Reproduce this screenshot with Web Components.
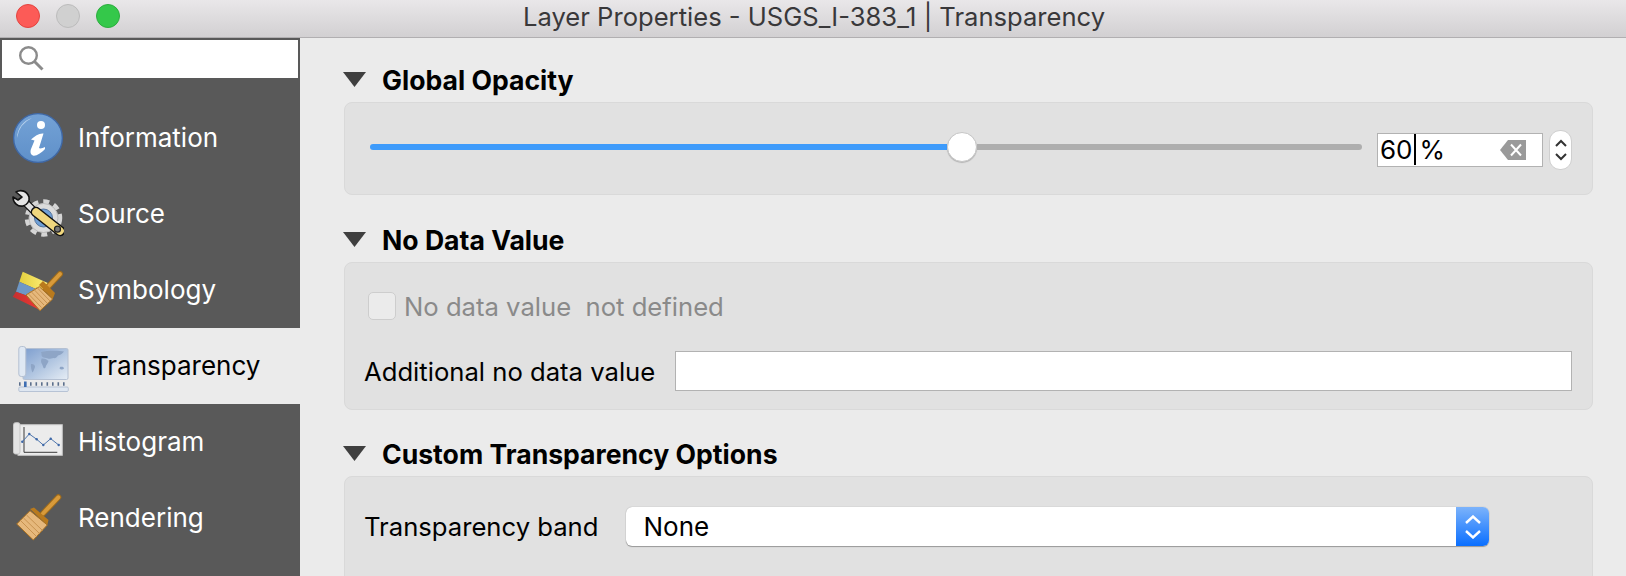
<!DOCTYPE html>
<html lang="en">
<head>
<meta charset="utf-8">
<title>Layer Properties</title>
<style>
html, body {
	margin: 0;
	height: 576px;
	overflow: hidden;
	background: #ebebeb;
	font-family: Inter, "Liberation Sans", sans-serif;
	font-size: 26px;
	color: #000;
}
#window {
	display: flex;
	flex-direction: column;
	height: 576px;
}
#main {
	display: flex;
	flex: 1;
	min-height: 0;
}
#content {
	flex: 1;
	min-width: 0;
	padding: 22px 33px 0 44px;
	overflow: hidden;
}
</style>
</head>
<body>
<div id="window">
	<mac-titlebar>Layer Properties - USGS_I-383_1 | Transparency</mac-titlebar>
	<div id="main">
		<settings-sidebar>
			<sidebar-item>
				<svg slot="icon" width="52" height="52" viewBox="0 0 52 52">
					<defs>
						<linearGradient id="infoFill" x1="0" y1="0" x2="0" y2="1"><stop offset="0" stop-color="#74a2d6"/><stop offset="1" stop-color="#5f90c9"/></linearGradient>
					</defs>
					<circle cx="26" cy="26" r="24.4" fill="url(#infoFill)" stroke="#3f68a6" stroke-width="1.4"/>
					<path d="M5 26 A21 21 0 0 1 20 6 A26 26 0 0 0 5 26Z" fill="#b9d2ec"/>
					<circle cx="29" cy="13" r="4" fill="#fff"/>
					<path d="M19 27.5C23 24 27 21 31.5 21.5L27 36C28 37 31 36 33 35L33 37C29 41 25 44 21.5 43.7C18.5 43 18 40 19 37L22.5 28.5Z" fill="#fff"/>
				</svg>
				Information
			</sidebar-item>
			<sidebar-item>
				<svg slot="icon" width="52" height="52" viewBox="0 0 52 52">
					<circle cx="31.5" cy="30" r="16.5" fill="none" stroke="#d5d5d5" stroke-width="4.5" stroke-dasharray="6 5"/>
					<circle cx="31.5" cy="30" r="14.5" fill="#dcdcdc" stroke="#bdbdbd" stroke-width="1"/>
					<circle cx="31.5" cy="30" r="9" fill="#6f9fd6" stroke="#54749c" stroke-width="1"/>
					<path d="M23 24L12 13" stroke="#111" stroke-width="8" stroke-linecap="round"/>
					<path d="M23 24L12 13" stroke="#dfdfdf" stroke-width="5.4" stroke-linecap="round"/>
					<path d="M4 4C9 1 15 3 17 9C18 13 15 17 11 18C6 19 1 15 1 9L6 12L10 9Z" fill="#e4e4e4" stroke="#111" stroke-width="1.6" stroke-linejoin="round"/>
					<path d="M24 24L48 43" stroke="#111" stroke-width="10.5" stroke-linecap="round"/>
					<path d="M24 24L48 43" stroke="#f0d77e" stroke-width="7.6" stroke-linecap="round"/>
					<circle cx="45.5" cy="41.2" r="3" fill="#777" stroke="#222" stroke-width="1.2"/>
				</svg>
				Source
			</sidebar-item>
			<sidebar-item>
				<svg slot="icon" width="52" height="52" viewBox="0 0 52 52">
					<defs>
						<linearGradient id="flagYellow" x1="0" y1="0" x2="1" y2="0"><stop offset="0" stop-color="#e3cf3e"/><stop offset="1" stop-color="#fff07a"/></linearGradient>
						<linearGradient id="flagRed" x1="0" y1="0" x2="1" y2="0"><stop offset="0" stop-color="#c52f2f"/><stop offset="1" stop-color="#f03a34"/></linearGradient>
					</defs>
					<path d="M10.7 7.7L36.3 19.3L33 29L7.3 17.7Z" fill="url(#flagYellow)"/>
					<path d="M7.3 17.7L33 29L30 37L4 27.7Z" fill="#6e97c6"/>
					<path d="M4 27.7L30 37L28 46L.7 32.7Z" fill="url(#flagRed)"/>
					<path d="M48 10L34 25" stroke="#9c6a1c" stroke-width="6" stroke-linecap="round"/>
					<path d="M48 10L34 25" stroke="#d89a3a" stroke-width="4" stroke-linecap="round"/>
					<path d="M27.3 22.7L40.7 35L28 46.7L14 31Z" fill="#e6b87c" stroke="#a9701f" stroke-width="1"/>
					<path d="M18.5 27L32 41M21.5 25L35 39M24.500 23L38 37M16 29.500L29.500 43.500" stroke="#c79250" stroke-width="1"/>
					<path d="M27 21L31 17L43 29L40.700 35Z" fill="#b97a1d"/>
				</svg>
				Symbology
			</sidebar-item>
			<sidebar-item selected>
				<svg slot="icon" width="52" height="52" viewBox="0 0 52 52">
					<defs>
						<linearGradient id="mapFill" x1="0" y1="0" x2="1" y2="1"><stop offset="0" stop-color="#7c9dce"/><stop offset=".55" stop-color="#b4c8e2"/><stop offset="1" stop-color="#e6edf5"/></linearGradient>
					</defs>
					<rect x="6" y="8.500" width="45" height="31" rx="1.500" fill="url(#mapFill)" stroke="#b4c0d2"/>
					<g fill="#8ea5c6">
						<path d="M24 12C30 10.500 42 10.500 47 11.500C45.500 14 43 15 41 15.500C40 17.500 38 18.500 36.500 18C34.500 18 32 19.500 31 18.500C29 17.500 26 18 25 16.500C24 15 25 13.500 24 12Z"/>
						<path d="M24.500 18.500C27 18 30.500 19.500 31.500 21C30.500 24 29 25 28.500 27.500C27.500 29 26.500 28.500 26 26.500C25.500 24.500 24 23 24 21Z"/>
						<path d="M14 24C16 23.500 18.500 25 18 27C17 29.500 16.500 31.500 15.500 32.500C14.500 30.500 13.500 26.500 14 24Z"/>
						<path d="M43 27C45 26.500 47 27 47 28.500C45.500 30 43.500 29.500 42.500 28.500Z"/>
					</g>
					<rect x="1.800" y="6.500" width="7" height="30" rx="2.500" fill="#dfe8f3" stroke="#b4c0d2"/>
					<path d="M2 44H51" stroke="#5b6f8c" stroke-width="3.600" stroke-dasharray="1.600 3.900"/>
					<rect x="1.800" y="47" width="49.500" height="4.500" rx="1.200" fill="#dfe7f1" stroke="#b7c3d5"/>
					<rect x="7" y="41.500" width="2.600" height="5.500" fill="#3f6fb3"/>
				</svg>
				Transparency
			</sidebar-item>
			<sidebar-item>
				<svg slot="icon" width="52" height="52" viewBox="0 0 52 52">
					<rect x="6" y="8.700" width="44.300" height="30.600" fill="#ececec" stroke="#c6c6c6"/>
					<rect x="1.500" y="6.700" width="6.500" height="31.300" rx="2" fill="#e4e4e4" stroke="#c6c6c6"/>
					<path d="M12 11V36.300H45.300" fill="none" stroke="#3a3a3a" stroke-width="1"/>
					<path d="M10.300 25.700L17.300 18L24.700 23.300L31.300 29L38.700 22.700L46.700 29" fill="none" stroke="#4f76ad" stroke-width="1"/>
					<g fill="#3e68a8">
						<circle cx="10.300" cy="25.700" r="1.200"/><circle cx="17.300" cy="18" r="1.200"/><circle cx="24.700" cy="23.300" r="1.200"/><circle cx="31.300" cy="29" r="1.200"/><circle cx="38.700" cy="22.700" r="1.200"/><circle cx="46.700" cy="29" r="1.200"/>
					</g>
				</svg>
				Histogram
			</sidebar-item>
			<sidebar-item>
				<svg slot="icon" width="52" height="52" viewBox="0 0 52 52">
					<path d="M46.300 5.300L31 21.500" stroke="#9c6a1c" stroke-width="6" stroke-linecap="round"/>
					<path d="M46.300 5.300L31 21.500" stroke="#d89a3a" stroke-width="4" stroke-linecap="round"/>
					<path d="M18 18.700L35.300 33L21.300 48L4.700 32Z" fill="#e6b87c" stroke="#a9701f" stroke-width="1"/>
					<path d="M8.500 28.500L24.500 44.500M11.500 26L27.500 41.500M14.500 23L30.500 38.500" stroke="#c79250" stroke-width="1"/>
					<path d="M18 17L22 15.500L36.500 28L35.300 33Z" fill="#b97a1d"/>
				</svg>
				Rendering
			</sidebar-item>
		</settings-sidebar>
		<div id="content">
			<prop-group heading="Global Opacity" style="--box-height: 93px">
				<opacity-slider value="60"></opacity-slider>
			</prop-group>
			<prop-group heading="No Data Value" style="--box-height: 148px; --gap-top: 25px">
				<no-data-form></no-data-form>
			</prop-group>
			<prop-group heading="Custom Transparency Options" style="--box-height: 130px; --gap-top: 24px">
				<band-form></band-form>
			</prop-group>
		</div>
	</div>
</div>

<script>
const makeTemplate = (html) => {
	const t = document.createElement('template');
	t.innerHTML = html;
	return t;
}

// Every element here only needs a template cloned into an open shadow root
const defineElement = (name, html) => {
	const template = makeTemplate(html);
	customElements.define(name, class extends HTMLElement {
		constructor() {
			super();
			this.attachShadow({mode: 'open'}).appendChild(template.content.cloneNode(true));
		}
	});
}

defineElement('mac-titlebar', `
<style>
:host {
	display: flex;
	align-items: center;
	box-sizing: border-box;
	height: 38px;
	flex: none;
	padding-left: 16px;
	background: linear-gradient(#e9e7e9, #d2d0d2);
	border-bottom: 1px solid #b1afb1;
}
.light {
	width: 22px;
	height: 22px;
	margin: 0 16px 5px 0;
	border-radius: 50%;
	border: 1px solid;
	flex: none;
}
.close { background: #fc5b57; border-color: #e3443f; }
.min { background: #d0d0d0; border-color: #bcbcbc; }
.max { background: #34c84a; border-color: #2cad3e; }
.title {
	margin-left: 387px;
	padding-bottom: 4px;
	font-size: 25.6px;
	color: #39383a;
	white-space: nowrap;
}
</style>
<span class="light close"></span><span class="light min"></span><span class="light max"></span>
<span class="title"><slot></slot></span>
`);

defineElement('settings-sidebar', `
<style>
:host {
	display: block;
	flex: none;
	width: 300px;
	background: #595959;
}
.search {
	display: flex;
	align-items: center;
	box-sizing: border-box;
	height: 38px;
	margin: 2px 2px 22px;
	padding-left: 16px;
	background: #fff;
}
</style>
<div class="search">
	<svg width="28" height="28" viewBox="0 0 28 28" fill="none" stroke="#8b8b8b" stroke-width="2.400">
		<circle cx="10.500" cy="10.500" r="8.300"/>
		<path d="M16.500 16.500L24.500 24.500" stroke-width="3"/>
	</svg>
</div>
<slot></slot>
`);

defineElement('sidebar-item', `
<style>
:host {
	display: flex;
	align-items: center;
	height: 76px;
	padding-left: 12px;
	gap: 14px;
	color: #fff;
	font-size: 26px;
}
:host([selected]) {
	padding-left: 17px;
	gap: 23px;
	background: #ebebeb;
	color: #000;
}
.icon {
	display: block;
	width: 52px;
	height: 52px;
	flex: none;
}
.label { margin-bottom: 2px; }
</style>
<span class="icon"><slot name="icon"></slot></span>
<span class="label"><slot></slot></span>
`);

const propGroupTemplate = makeTemplate(`
<style>
:host {
	display: block;
	margin-top: var(--gap-top, 0);
}
.head {
	display: flex;
	align-items: center;
	height: 40px;
	margin-bottom: 2px;
	font-weight: 700;
	font-size: 26.6px;
}
.head svg {
	flex: none;
	margin: 0 16px 1px -1px;
}
.box {
	box-sizing: border-box;
	height: var(--box-height);
	background: #e1e1e1;
	border: 1px solid #d9d9d9;
	border-radius: 8px;
}
</style>
<div class="head">
	<svg width="23" height="15" viewBox="0 0 23 15"><path d="M0 0H23L11.500 15Z" fill="#3f3f3f"/></svg>
	<span id="heading"></span>
</div>
<div class="box"><slot></slot></div>
`);

customElements.define('prop-group', class extends HTMLElement {
	constructor() {
		super();
		const root = this.attachShadow({mode: 'open'});
		root.appendChild(propGroupTemplate.content.cloneNode(true));
		root.querySelector('#heading').textContent = this.getAttribute('heading');
	}
});

const opacitySliderTemplate = makeTemplate(`
<style>
:host {
	display: flex;
	align-items: center;
	height: 87px;
	padding: 0 20px 0 25px;
}
.track {
	display: flex;
	align-items: center;
	flex: 1;
	min-width: 0;
	margin-right: 15px;
}
.fill {
	flex: 0 0 577px;
	height: 6px;
	background: #3e9bfb;
	border-radius: 3px 0 0 3px;
}
.thumb {
	flex: none;
	box-sizing: border-box;
	width: 30px;
	height: 30px;
	background: #fff;
	border: 1px solid #c6c6c6;
	border-radius: 50%;
	box-shadow: 0 1px 1px rgba(0,0,0,0.2);
}
.rest {
	flex: 1;
	height: 6px;
	background: #aeaeae;
	border-radius: 0 3px 3px 0;
}
.input {
	display: flex;
	align-items: center;
	box-sizing: border-box;
	flex: none;
	width: 166px;
	height: 34px;
	margin-top: 6px;
	padding: 0 16px 0 2px;
	background: #fff;
	border: 1px solid #b2b2b2;
	font-size: 26px;
}
.caret {
	width: 2px;
	height: 31px;
	margin: 0 4px 0 1px;
	background: #000;
}
.value { white-space: pre; }
.clear { margin-left: auto; display: block; }
.stepper {
	display: flex;
	flex-direction: column;
	align-items: center;
	justify-content: center;
	gap: 6px;
	box-sizing: border-box;
	flex: none;
	width: 23px;
	height: 40px;
	margin: 6px 0 0 6px;
	background: #fff;
	border: 1px solid #cfcfcf;
	border-radius: 11px;
}
</style>
<div class="track"><div class="fill"></div><div class="thumb"></div><div class="rest"></div></div>
<div class="input">
	<span class="value" id="value"></span><span class="caret"></span><span>%</span>
	<svg class="clear" width="26" height="20" viewBox="0 0 26 20"><path d="M8 0H26V20H8L0 10Z" fill="#9a9a9a"/><path d="M11 4.500L21 15.500M21 4.500L11 15.500" stroke="#fff" stroke-width="2"/></svg>
</div>
<div class="stepper">
	<svg width="12" height="8" viewBox="0 0 12 8" fill="none" stroke="#333" stroke-width="2"><path d="M1 7L6 2L11 7"/></svg>
	<svg width="12" height="8" viewBox="0 0 12 8" fill="none" stroke="#333" stroke-width="2"><path d="M1 1L6 6L11 1"/></svg>
</div>
`);

customElements.define('opacity-slider', class extends HTMLElement {
	constructor() {
		super();
		const root = this.attachShadow({mode: 'open'});
		root.appendChild(opacitySliderTemplate.content.cloneNode(true));
		root.querySelector('#value').textContent = this.getAttribute('value');
	}
});

defineElement('no-data-form', `
<style>
:host {
	display: block;
	padding: 29px 20px 0 19px;
	font-size: 25.65px;
}
.check {
	display: flex;
	align-items: center;
	height: 28px;
	padding-left: 4px;
	color: #8a8a8a;
	white-space: pre;
}
.box {
	box-sizing: border-box;
	flex: none;
	width: 28px;
	height: 28px;
	margin-right: 8px;
	background: #ebebeb;
	border: 1px solid #cdcdcd;
	border-radius: 5px;
}
.row {
	display: flex;
	align-items: center;
	gap: 20px;
	margin-top: 31px;
}
.field {
	flex: 1;
	box-sizing: border-box;
	height: 40px;
	background: #fff;
	border: 1px solid #b2b2b2;
}
</style>
<div class="check"><span class="box"></span><span>No data value  not defined</span></div>
<div class="row"><span>Additional no data value</span><span class="field"></span></div>
`);

defineElement('band-form', `
<style>
:host {
	display: flex;
	align-items: center;
	gap: 28px;
	padding: 30px 103px 0 19px;
	font-size: 25.65px;
}
.select {
	display: flex;
	align-items: center;
	flex: 1;
	box-sizing: border-box;
	height: 39px;
	padding-left: 17px;
	background: #fff;
	border-radius: 6px;
	box-shadow: 0 0 1px rgba(0,0,0,0.35), 0 1px 1px rgba(0,0,0,0.3);
	overflow: hidden;
	font-size: 26px;
}
.text { flex: 1; }
.arrows {
	display: flex;
	flex-direction: column;
	align-items: center;
	justify-content: center;
	gap: 6px;
	flex: none;
	width: 33px;
	align-self: stretch;
	background: linear-gradient(#7cb3fb, #0a6fff);
}
</style>
<span>Transparency band</span>
<div class="select">
	<span class="text">None</span>
	<span class="arrows">
		<svg width="16" height="9" viewBox="0 0 16 9" fill="none" stroke="#fff" stroke-width="2.400"><path d="M1 8L8 1.500L15 8"/></svg>
		<svg width="16" height="9" viewBox="0 0 16 9" fill="none" stroke="#fff" stroke-width="2.400"><path d="M1 1L8 7.500L15 1"/></svg>
	</span>
</div>
`);
</script>
</body>
</html>
